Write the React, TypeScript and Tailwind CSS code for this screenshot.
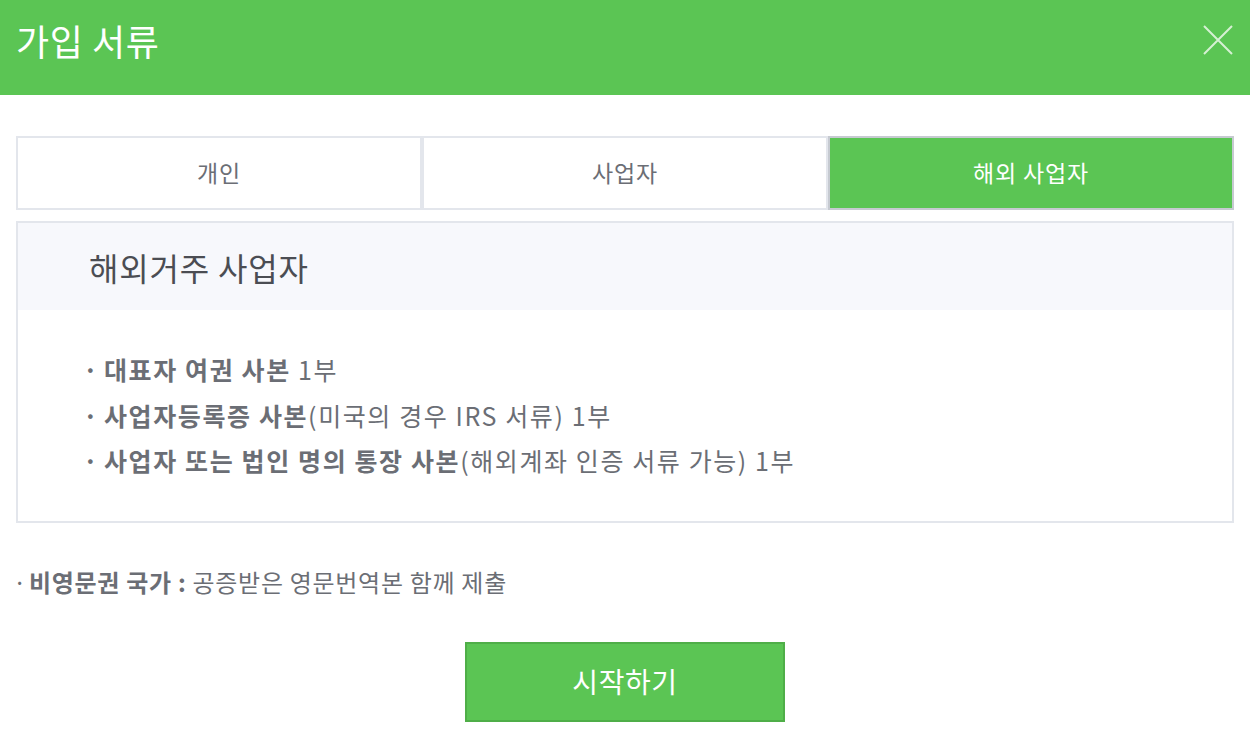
import React, { useState } from 'react';

const FONT = { fontFamily: '"Noto Sans CJK KR", "Noto Sans", sans-serif' };

const TABS = ['개인', '사업자', '해외 사업자'];

const ITEMS: { strong: string; rest: string }[] = [
  { strong: '대표자 여권 사본', rest: ' 1부' },
  { strong: '사업자등록증 사본', rest: '(미국의 경우 IRS 서류) 1부' },
  { strong: '사업자 또는 법인 명의 통장 사본', rest: '(해외계좌 인증 서류 가능) 1부' },
];

export default function App() {
  const [tab, setTab] = useState(2);

  return (
    <div className="min-h-[746px] bg-white" style={FONT}>
      {/* Header */}
      <div className="flex h-[95px] items-start justify-between bg-[#5bc554] pl-[16px] pr-[17px] pt-[17px]">
        <h1 className="text-[36px] leading-[46px] font-normal tracking-[0.6px] text-white">가입 서류</h1>
        <button className="mt-[8px] h-[30px] w-[30px]">
          <svg viewBox="0 0 30 30" className="h-[30px] w-[30px]">
            <path d="M1 1 L29 29 M29 1 L1 29" stroke="#d6f0d3" strokeWidth="2" />
          </svg>
        </button>
      </div>

      <div className="px-[16px]">
        {/* Tabs */}
        <div className="mt-[41px] grid h-[74px] grid-cols-3">
          {TABS.map((t, i) => (
            <button
              key={t}
              onClick={() => setTab(i)}
              className={
                i === tab
                  ? 'border-2 border-[#c6cad1] bg-[#5bc554] pb-[2px] text-[23px] tracking-[0.8px] text-white'
                  : 'border-2 border-[#e3e6ec] bg-white pb-[2px] text-[23px] tracking-[0.8px] text-[#6b6e75]'
              }
            >
              {t}
            </button>
          ))}
        </div>

        {/* Content box */}
        <div className="mt-[11px] border-2 border-[#e3e6ec]">
          <div className="flex h-[87px] items-center bg-[#f7f8fc] pl-[71px]">
            <h2 className="text-[32px] font-normal tracking-[0.8px] text-[#4b4d53]">해외거주 사업자</h2>
          </div>
          <ul className="pb-[37px] pl-[65px] pt-[37px] text-[25px] leading-[45.5px] tracking-[1.6px] text-[#6b6e75]">
            {ITEMS.map((it) => (
              <li key={it.strong}>
                <b className="inline-block w-[21px] font-bold">·</b>
                <b className="font-bold">{it.strong}</b>
                {it.rest}
              </li>
            ))}
          </ul>
        </div>

        {/* Note */}
        <p className="mt-[43px] text-[24px] leading-[32px] tracking-[0.7px] text-[#6b6e75]">
          <span className="-ml-[3px] inline-block w-[16px]">·</span>
          <b className="font-bold">비영문권 국가 :</b> 공증받은 영문번역본 함께 제출
        </p>

        <div className="mt-[44px] flex justify-center">
          <button className="h-[80px] w-[320px] border-2 border-[#4fae48] bg-[#5bc554] pb-[2px] text-[28px] tracking-[0.6px] text-white">
            시작하기
          </button>
        </div>
      </div>
    </div>
  );
}
